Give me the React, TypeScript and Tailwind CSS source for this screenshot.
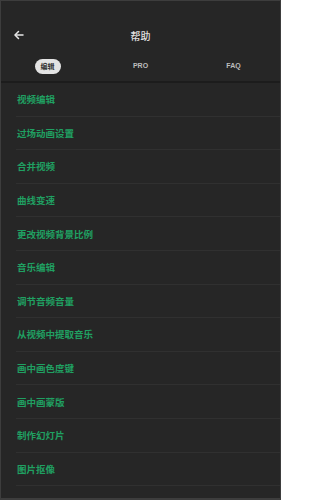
import React from "react";

const items = [
  "视频编辑",
  "过场动画设置",
  "合并视频",
  "曲线变速",
  "更改视频背景比例",
  "音乐编辑",
  "调节音频音量",
  "从视频中提取音乐",
  "画中画色度键",
  "画中画蒙版",
  "制作幻灯片",
  "图片抠像",
];

export default function App() {
  return (
    <div
      className="w-[281px] h-[500px] bg-[#262626] border border-[#3d3d3d] border-b-2 overflow-hidden flex flex-col"
      style={{ fontFamily: '"Noto Sans CJK SC", "Noto Sans", sans-serif' }}
    >
      <div className="h-[51px] pt-[18px] relative flex items-center justify-center shrink-0">
        <svg
          className="absolute left-[12px] top-[28px]"
          width="12"
          height="12"
          viewBox="0 0 24 24"
          fill="none"
          stroke="#e6e6e6"
          strokeWidth="3"
          strokeLinecap="round"
          strokeLinejoin="round"
        >
          <path d="M20 12H5" />
          <path d="M11 5l-7 7 7 7" />
        </svg>
        <span className="text-[10px] text-[#e0e0e0] font-medium">帮助</span>
      </div>
      <div className="h-[31px] grid grid-cols-3 items-center shrink-0 border-b-2 border-[#1c1c1c]">
        <div className="flex justify-center">
          <span className="w-[26px] h-[15px] rounded-full bg-[#e3e3e3] text-[#333] text-[7px] font-bold flex items-center justify-center">
            编辑
          </span>
        </div>
        <div className="flex justify-center text-[7px] font-bold text-[#bdbdbd]" style={{ fontFamily: '"Liberation Sans", sans-serif' }}>
          PRO
        </div>
        <div className="flex justify-center text-[7px] font-bold text-[#bdbdbd]" style={{ fontFamily: '"Liberation Sans", sans-serif' }}>
          FAQ
        </div>
      </div>
      <div className="pl-[15px] flex flex-col">
        {items.map((t) => (
          <div
            key={t}
            className="h-[33.6px] flex items-center border-b border-[#303030] shrink-0"
          >
            <span className="pl-px text-[9.5px] font-bold text-[#20a062]">{t}</span>
          </div>
        ))}
      </div>
    </div>
  );
}
